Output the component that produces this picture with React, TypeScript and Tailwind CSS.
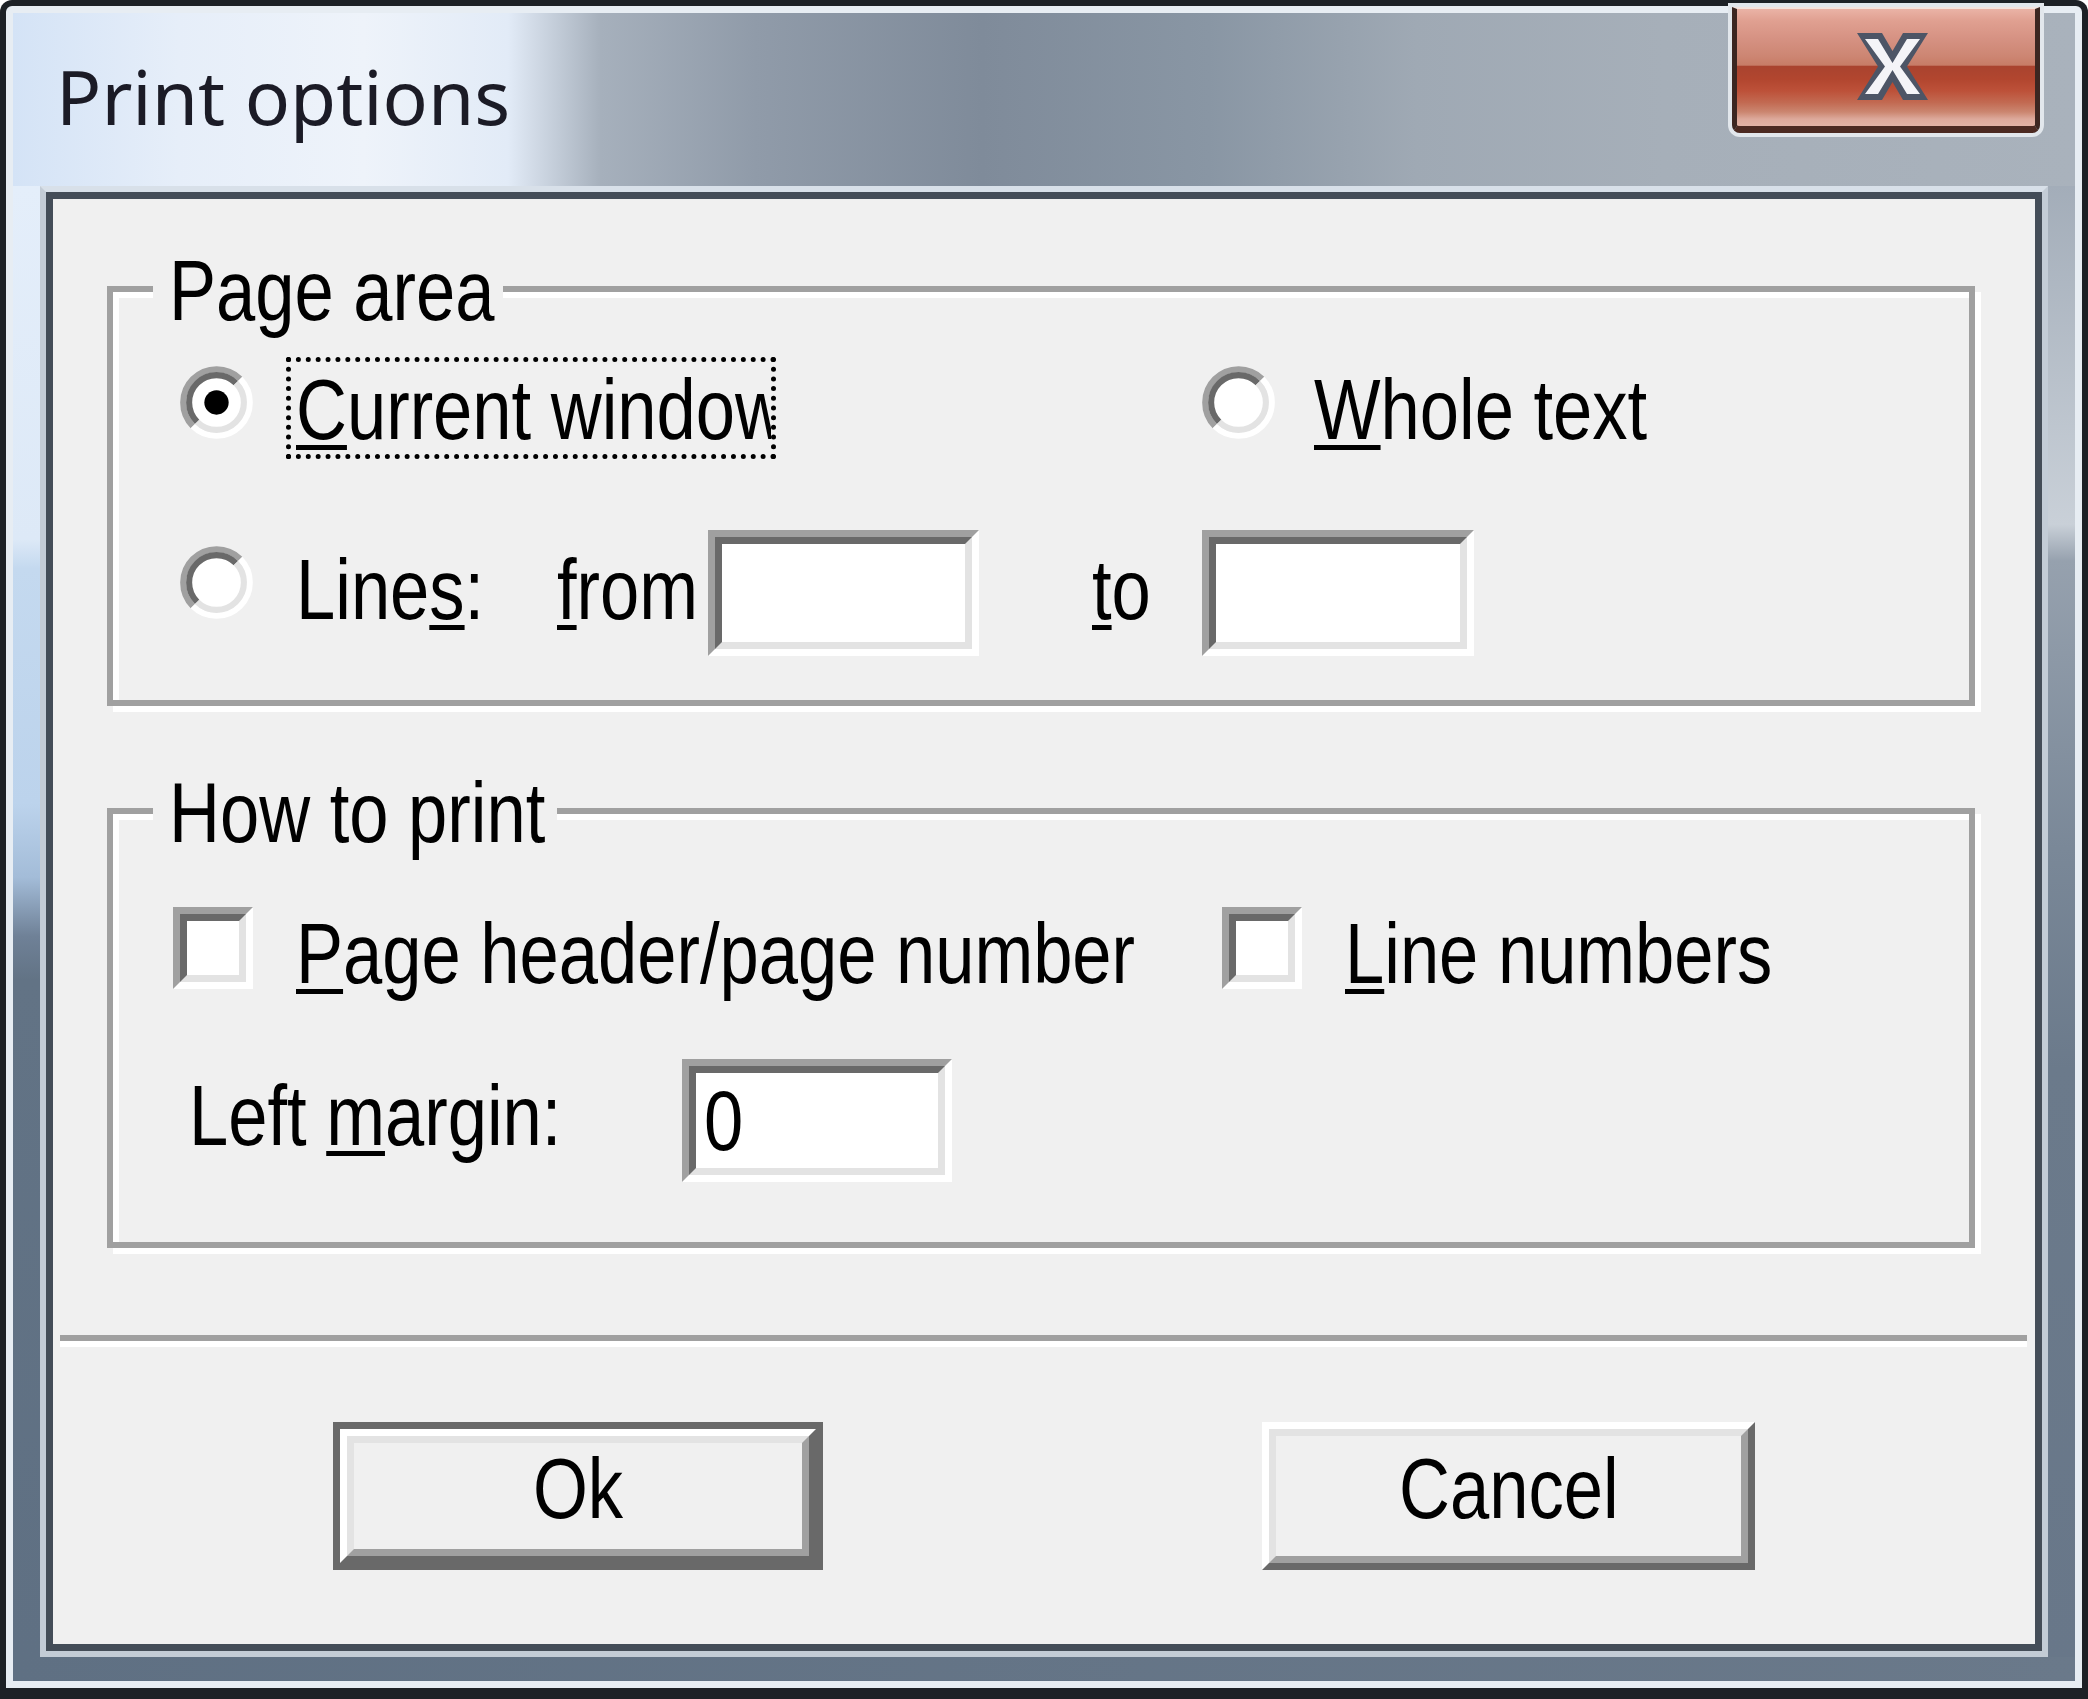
import React from 'react';

const FONT =
  "font-['Liberation_Sans_Narrow','Liberation_Sans',sans-serif] text-[86px] leading-[86px] text-black whitespace-nowrap";

// dialog font is a narrow one, squeeze Liberation Sans to the Arial Narrow width
const Txt = ({ children, className = '', center }: { children: React.ReactNode; className?: string; center?: boolean }) => (
  <div className={`${FONT} ${className}`}>
    <span className={center ? 'inline-block origin-center scale-x-[0.82]' : 'inline-block origin-left scale-x-[0.82]'}>
      {children}
    </span>
  </div>
);

const Acc = ({ children }: { children: React.ReactNode }) => (
  <span className="underline decoration-[5px] underline-offset-[6px] [text-decoration-skip-ink:none]">{children}</span>
);

const Radio = ({ checked }: { checked?: boolean }) => (
  <svg width="73" height="73" viewBox="0 0 12 12" className="shrink-0">
    <circle cx="6" cy="6" r="4.5" fill="#fff" />
    <path d="M2.111 9.889A5.5 5.5 0 0 1 9.889 2.111" fill="none" stroke="#a0a0a0" strokeWidth="1" />
    <path d="M9.889 2.111A5.5 5.5 0 0 1 2.111 9.889" fill="none" stroke="#ffffff" strokeWidth="1" />
    <path d="M2.818 9.182A4.5 4.5 0 0 1 9.182 2.818" fill="none" stroke="#696969" strokeWidth="1" />
    <path d="M9.182 2.818A4.5 4.5 0 0 1 2.818 9.182" fill="none" stroke="#e3e3e3" strokeWidth="1" />
    {checked && <circle cx="6" cy="6" r="2" fill="#000" />}
  </svg>
);

// sunken 3d box used by edit fields and check boxes
const Sunken = ({ className, children }: { className: string; children?: React.ReactNode }) => (
  <div className={`shrink-0 border-[7px] border-t-[#a0a0a0] border-l-[#a0a0a0] border-b-white border-r-white ${className}`}>
    <div className="h-full w-full border-[7px] border-t-[#696969] border-l-[#696969] border-b-[#e3e3e3] border-r-[#e3e3e3] bg-white">
      {children}
    </div>
  </div>
);

const CloseX = () => (
  <svg width="71" height="67" viewBox="0 0 71 67">
    <polygon
      points="0,0 25,0 35.5,18 46,0 71,0 50,33.5 71,67 46,67 35.5,49 25,67 0,67 21,33.5"
      fill="#4d5566"
    />
    <polygon
      points="8,6 21,6 35.5,30 50,6 63,6 43,33.5 63,61 50,61 35.5,37 21,61 8,61 28,33.5"
      fill="#f4f4f8"
    />
  </svg>
);

const App: React.FC = () => {
  return (
    <div className="w-[2088px] h-[1699px] bg-[#1d2126] pt-[6px] px-[6px] pb-[11px] rounded-t-[12px]">
      <div className="flex h-full flex-col rounded-t-[6px] border-[7px] border-[#e7edf3]">
        {/* title bar */}
        <div className="flex h-[173px] shrink-0 bg-[linear-gradient(to_right,#d4e3f6_0%,#e6eef9_8%,#eef3fa_17%,#e2ebf7_24%,#a6b0bc_28.5%,#909ba9_36%,#7f8b9a_47%,#8996a4_58%,#9fa9b4_68%,#a6afb9_80%,#a9b2bc_100%)]">
          <div className="ml-[43px] mt-[46px] font-['Noto_Sans',sans-serif] text-[75px] leading-[75px] text-[#1b1b26] whitespace-nowrap">
            Print options
          </div>
          <div className="ml-auto mr-[35px] -mt-[6px] flex h-[126px] w-[308px] shrink-0 justify-center rounded-b-[8px] border-x-[5px] border-t-[2px] border-b-[7px] border-x-[#3c2621] border-t-[#f3e3de] border-b-[#4c2a22] bg-[linear-gradient(to_bottom,#eab3a6_0%,#e0a091_10%,#d69283_25%,#cd8673_40%,#c77c67_48%,#a9432f_49%,#b2462f_60%,#bd5139_70%,#c26a52_80%,#cb8670_88%,#dda99b_94%,#e2b3a6_100%)] pl-[13px] pt-[24px] shadow-[0_0_0_4px_#e2e7ec]">
            <CloseX />
          </div>
        </div>

        {/* side frames + client */}
        <div className="flex flex-1">
          <div className="w-[27px] shrink-0 bg-[linear-gradient(to_bottom,#e4eefa_0%,#dde9f7_24%,#c4d9ef_26%,#bcd3ec_42%,#a3bcd8_47%,#6f8197_51%,#627385_54%,#5f7083_100%)]" />
          <div className="flex-1 border-[6px] border-[#c3ccd6] border-t-[#d8e0e9]">
            <div className="flex h-full flex-col border-[7px] border-[#444d58] bg-[#f0f0f0]">
              {/* Page area */}
              <div className="relative ml-[54px] mr-[60px] mt-[87px] h-[420px] border-[6px] border-[#a0a0a0] shadow-[inset_6px_6px_0_#fff,6px_6px_0_#fff]">
                <Txt className="absolute left-[40px] top-[-45px] w-[350px] bg-[#f0f0f0] pl-[16px]">Page area</Txt>
                <div className="pt-[65px]">
                  <div className="flex h-[102px] items-start">
                    <div className="ml-[67px] mt-[9px] w-[106px] shrink-0">
                      <Radio checked />
                    </div>
                    <Txt className="h-[102px] w-[490px] shrink-0 overflow-hidden border-[5px] border-dotted border-black pl-[5px] pt-[4px]">
                      <Acc>C</Acc>urrent window
                    </Txt>
                    <div className="ml-[426px] mt-[9px] w-[112px] shrink-0">
                      <Radio />
                    </div>
                    <Txt className="mt-[9px]">
                      <Acc>W</Acc>hole text
                    </Txt>
                  </div>
                  <div className="mt-[71px] flex h-[126px] items-start">
                    <div className="ml-[67px] mt-[16px] w-[116px] shrink-0">
                      <Radio />
                    </div>
                    <Txt className="mt-[16px] w-[261px] shrink-0">
                      Line<Acc>s</Acc>:
                    </Txt>
                    <Txt className="mt-[16px] w-[151px] shrink-0">
                      <Acc>f</Acc>rom
                    </Txt>
                    <Sunken className="h-[126px] w-[271px]" />
                    <Txt className="ml-[113px] mt-[16px] w-[110px] shrink-0">
                      <Acc>t</Acc>o
                    </Txt>
                    <Sunken className="h-[126px] w-[272px]" />
                  </div>
                </div>
              </div>

              {/* How to print */}
              <div className="relative ml-[54px] mr-[60px] mt-[102px] h-[440px] border-[6px] border-[#a0a0a0] shadow-[inset_6px_6px_0_#fff,6px_6px_0_#fff]">
                <Txt className="absolute left-[40px] top-[-45px] w-[404px] bg-[#f0f0f0] pl-[16px]">How to print</Txt>
                <div className="pt-[93px]">
                  <div className="flex h-[82px] items-start">
                    <div className="ml-[60px] w-[123px] shrink-0">
                      <Sunken className="h-[82px] w-[80px]" />
                    </div>
                    <Txt className="mt-[3px] w-[926px] shrink-0">
                      <Acc>P</Acc>age header/page number
                    </Txt>
                    <div className="w-[123px] shrink-0">
                      <Sunken className="h-[82px] w-[80px]" />
                    </div>
                    <Txt className="mt-[3px]">
                      <Acc>L</Acc>ine numbers
                    </Txt>
                  </div>
                  <div className="mt-[70px] flex h-[123px] items-start">
                    <Txt className="ml-[76px] mt-[13px] w-[493px] shrink-0">
                      Left <Acc>m</Acc>argin:
                    </Txt>
                    <Sunken className="h-[123px] w-[270px]">
                      <Txt className="pl-[8px] pt-[4px]">0</Txt>
                    </Sunken>
                  </div>
                </div>
              </div>

              {/* separator */}
              <div className="ml-[7px] mr-[8px] mt-[87px] h-[12px] border-t-[6px] border-b-[6px] border-t-[#a0a0a0] border-b-white" />

              {/* buttons */}
              <div className="mt-[75px] flex">
                <div className="ml-[280px] h-[148px] w-[490px] shrink-0 border-[7px] border-[#696969]">
                  <div className="h-full border-[7px] border-t-white border-l-white border-b-[#696969] border-r-[#696969]">
                    <Txt center className="flex h-full justify-center border-[7px] border-t-[#e3e3e3] border-l-[#e3e3e3] border-b-[#a0a0a0] border-r-[#a0a0a0] pt-[2px]">
                      Ok
                    </Txt>
                  </div>
                </div>
                <div className="ml-[439px] h-[148px] w-[493px] shrink-0 border-[7px] border-t-white border-l-white border-b-[#696969] border-r-[#696969]">
                  <Txt center className="flex h-full justify-center border-[7px] border-t-[#e3e3e3] border-l-[#e3e3e3] border-b-[#a0a0a0] border-r-[#a0a0a0] pt-[9px]">
                    Cancel
                  </Txt>
                </div>
              </div>
            </div>
          </div>
          <div className="w-[27px] shrink-0 bg-[linear-gradient(to_bottom,#a3adb9_0%,#c9d0d8_23%,#96a1ae_25.5%,#7a8898_45%,#6b7a8b_60%,#687789_100%)]" />
        </div>

        {/* bottom frame */}
        <div className="h-[24px] shrink-0 bg-[linear-gradient(to_right,#5f7083,#6a798a)]" />
      </div>
    </div>
  );
};

export default App;
